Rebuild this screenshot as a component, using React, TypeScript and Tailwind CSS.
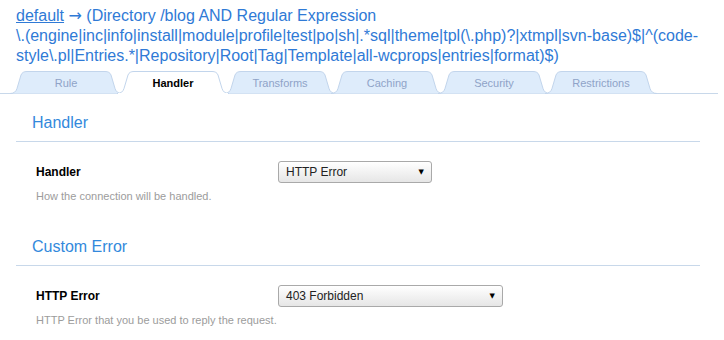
const tabs = ["Rule", "Handler", "Transforms", "Caching", "Security", "Restrictions"];

const TabShape = ({ active }: { active: boolean }) => (
  <svg className="absolute left-0 top-0" width="112" height="23" viewBox="0 0 112 23">
    <path
      d="M0,22.5 C4,22.5 6,20.5 7,17.5 L11,4 C12,1.5 14,0.5 17,0.5 L95,0.5 C98,0.5 100,1.5 101,4 L105,17.5 C106,20.5 108,22.5 112,22.5"
      fill={active ? "#ffffff" : "#deecfb"}
      stroke="#c2d5ec"
      strokeWidth="1"
    />
    {active && <rect x="1" y="22" width="110" height="2" fill="#ffffff" />}
  </svg>
);

const Select = ({ value, width }: { value: string; width: string }) => (
  <div
    className={`${width} h-[22px] flex items-center justify-between pl-[7px] pr-[7px] border border-[#a9a9a9] rounded-[3px] bg-gradient-to-b from-white to-[#e6e6e6] text-[12px] text-[#222]`}
  >
    <span>{value}</span>
    <span className="font-['DejaVu_Sans'] text-[7px] text-black">▼</span>
  </div>
);

const Field = ({ label, value, width, help }: { label: string; value: string; width: string; help: string }) => (
  <div className="pl-5">
    <div className="flex items-center mt-[19px]">
      <div className="w-[242px] text-[12px] font-bold text-black">{label}</div>
      <Select value={value} width={width} />
    </div>
    <p className="mt-[6px] text-[11px] leading-[14px] text-[#9c9c9c]">{help}</p>
  </div>
);

const App = () => {
  return (
    <div className="w-[724px] h-[340px] bg-white overflow-hidden font-['Liberation_Sans',Arial,sans-serif]">
      {/* Rule title */}
      <div className="px-4 pt-[6px] text-[16px] leading-[20px] text-[#2f7ad6] whitespace-nowrap">
        <a href="#" className="underline">default</a> <span className="font-['DejaVu_Sans']">→</span> (Directory /blog AND Regular Expression
        <br />
        \.(engine|inc|info|install|module|profile|test|po|sh|.*sql|theme|tpl(\.php)?|xtmpl|svn-base)$|^(code-
        <br />
        style\.pl|Entries.*|Repository|Root|Tag|Template|all-wcprops|entries|format)$)
      </div>

      {/* Tabs */}
      <div className="mt-[5px] mr-[6px] h-[23px] border-b border-[#c8d8ea] flex pl-[10px]">
        {tabs.map((t, i) => {
          const active = t === "Handler";
          return (
            <div
              key={t}
              className={`relative w-[112px] ${active ? "h-[23px] z-10" : "h-[22px]"} ${i > 0 ? "-ml-[5px]" : ""}`}
            >
              <TabShape active={active} />
              <div
                className={`relative h-[22px] pt-[3px] flex items-center justify-center text-[11px] ${
                  active ? "font-bold text-black" : "text-[#8fa3c8]"
                }`}
              >
                {t}
              </div>
            </div>
          );
        })}
      </div>

      {/* Handler section */}
      <div className="ml-4 w-[684px]">
        <h2 className="mt-[19px] pl-4 pb-[8px] text-[16px] leading-[20px] text-[#3389dc] border-b border-[#c8d8ea]">
          Handler
        </h2>
        <Field label="Handler" value="HTTP Error" width="w-[154px]" help="How the connection will be handled." />

        <h2 className="mt-[34px] pl-4 pb-[8px] text-[16px] leading-[20px] text-[#3389dc] border-b border-[#c8d8ea]">
          Custom Error
        </h2>
        <Field
          label="HTTP Error"
          value="403 Forbidden"
          width="w-[225px]"
          help="HTTP Error that you be used to reply the request."
        />
      </div>
    </div>
  );
};

export default App;
